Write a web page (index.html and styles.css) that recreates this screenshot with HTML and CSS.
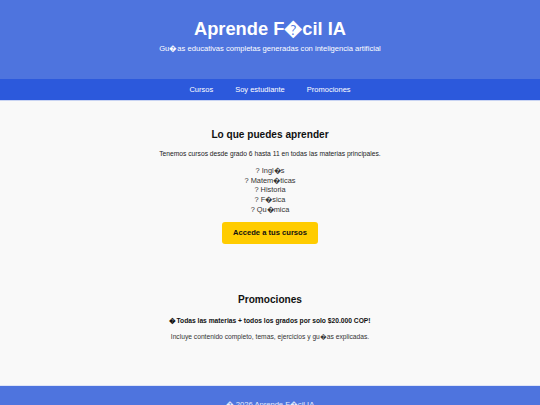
FILE: index.html
```html
<!DOCTYPE html>
<html lang="es">
<head>
<meta charset="utf-8">
<title>Aprende F�cil IA</title>
<link rel="stylesheet" href="styles.css">
</head>
<body>
<header class="hero">
  <h1 class="hero-title">Aprende F�cil IA</h1>
  <p class="hero-sub">Gu�as educativas completas generadas con inteligencia artificial</p>
</header>
<nav class="nav">
  <a class="nav-link" href="#cursos">Cursos</a>
  <a class="nav-link" href="#estudiante">Soy estudiante</a>
  <a class="nav-link" href="#promociones">Promociones</a>
</nav>
<main class="main">
  <section class="section section-cursos" id="cursos">
    <h2 class="section-title">Lo que puedes aprender</h2>
    <p class="section-text">Tenemos cursos desde grado 6 hasta 11 en todas las materias principales.</p>
    <ul class="subjects">
      <li>? Ingl�s</li>
      <li>? Matem�ticas</li>
      <li>? Historia</li>
      <li>? F�sica</li>
      <li>? Qu�mica</li>
    </ul>
    <a class="btn" href="#estudiante">Accede a tus cursos</a>
  </section>
  <section class="section section-promo" id="promociones">
    <h2 class="section-title">Promociones</h2>
    <p class="promo-strong">�Todas las materias + todos los grados por solo $20.000 COP!</p>
    <p class="promo-text">Incluye contenido completo, temas, ejercicios y gu�as explicadas.</p>
  </section>
</main>
<footer class="footer">
  <p class="footer-text">� 2026 Aprende F�cil IA</p>
</footer>
</body>
</html>
```
FILE: styles.css
```css
* { box-sizing: border-box; }
html, body { margin: 0; padding: 0; }
body {
  font-family: "Liberation Sans", Arial, sans-serif;
  background: #f9f9f9;
  color: #222;
}
.hero {
  background: #4e74de;
  color: #fff;
  text-align: center;
  height: 79px;
  padding-top: 17px;
}
.hero-title {
  margin: 0;
  font-size: 18.3px;
  font-weight: bold;
  line-height: 24px;
}
.hero-sub {
  margin: 3px 0 0;
  font-size: 7.6px;
  line-height: 10px;
}
.nav {
  background: #2c59dc;
  height: 22px;
  display: flex;
  justify-content: center;
  align-items: center;
  gap: 22px;
  border-bottom: 1px solid #c9d4f3;
}
.nav-link {
  color: #fff;
  text-decoration: none;
  font-size: 7.5px;
}
.main {
  height: 284px;
  text-align: center;
}
.section-cursos { padding-top: 27px; }
.section-title {
  margin: 0;
  font-size: 10.1px;
  font-weight: bold;
  line-height: 14px;
  color: #111;
}
.section-text {
  margin: 6.5px 0 0;
  font-size: 6.7px;
  line-height: 9px;
  color: #222;
}
.subjects {
  list-style: none;
  margin: 8.7px 0 0;
  padding: 0;
  font-size: 7.4px;
  line-height: 9.6px;
  color: #333;
}
.btn {
  display: block;
  margin: 8px auto 0;
  width: 96px;
  height: 22px;
  line-height: 22px;
  background: #ffcc00;
  border-radius: 3px;
  color: #111;
  font-size: 7.6px;
  font-weight: bold;
  text-decoration: none;
}
.section-promo { padding-top: 49px; }
.promo-strong {
  margin: 8.5px 0 0;
  font-size: 6.7px;
  font-weight: bold;
  line-height: 9px;
  color: #111;
}
.promo-text {
  margin: 7px 0 0;
  font-size: 6.7px;
  line-height: 9px;
  color: #333;
}
.footer {
  background: #4e74de;
  border-top: 1px solid #dfe5f7;
  height: 40px;
  text-align: center;
  padding-top: 14px;
}
.footer-text {
  margin: 0;
  color: #e6ecfb;
  font-size: 7.6px;
  line-height: 10px;
}
```
